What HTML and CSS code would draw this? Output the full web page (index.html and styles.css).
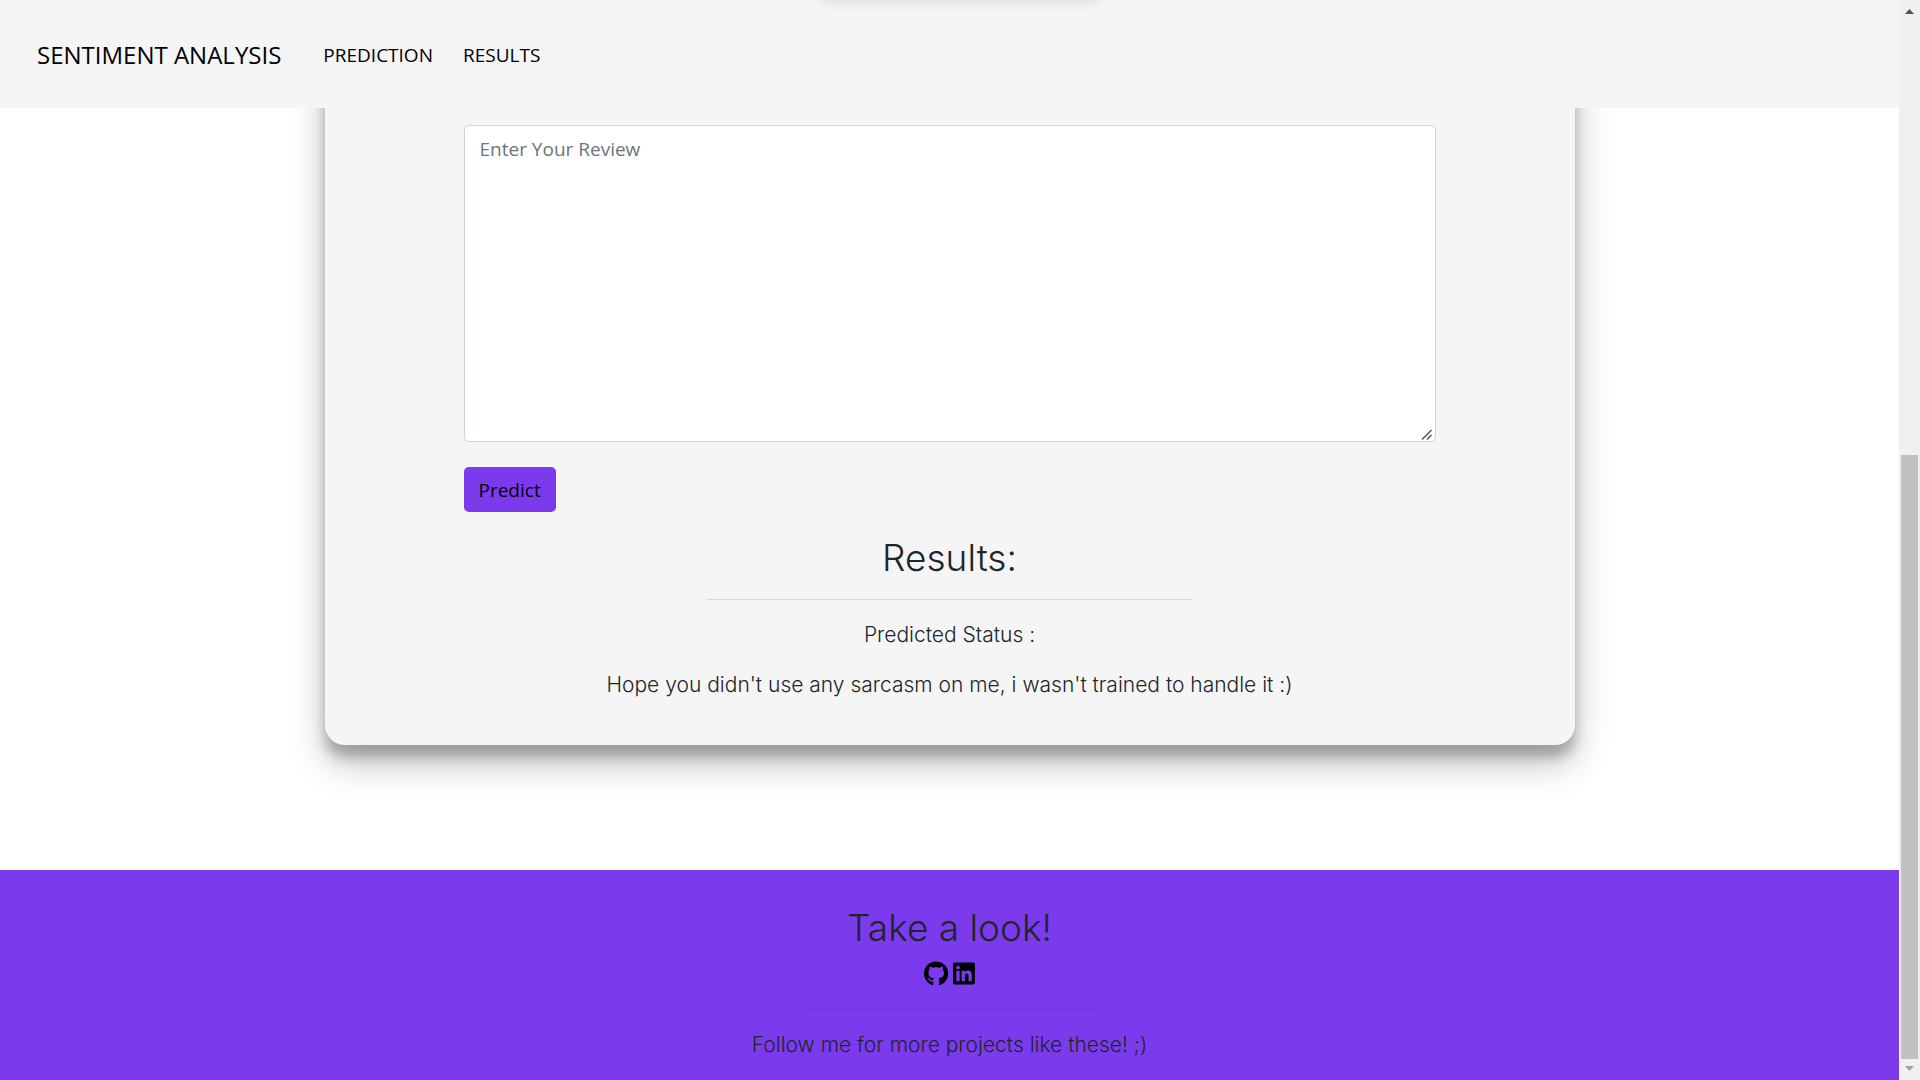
FILE: index.html
```html
<!DOCTYPE html>
<html lang="en">
<head>
<meta charset="utf-8">
<meta name="viewport" content="width=device-width, initial-scale=1">
<title>Sentiment Analysis</title>
<link rel="stylesheet" href="styles.css">
</head>
<body>
<div class="page">
  <header class="navbar">
    <a class="brand" href="#">SENTIMENT ANALYSIS</a>
    <nav class="nav-links">
      <a href="#prediction">PREDICTION</a>
      <a href="#results">RESULTS</a>
    </nav>
  </header>
  <main class="main">
    <section class="card">
      <form class="review-form" id="prediction">
        <textarea class="review-input" aria-label="Your review" placeholder="Enter Your Review"></textarea>
        <button class="predict" type="button">Predict</button>
      </form>
      <div class="results" id="results">
        <h2 class="title">Results:</h2>
        <hr class="rule">
        <p class="text">Predicted Status :</p>
        <p class="text">Hope you didn't use any sarcasm on me, i wasn't trained to handle it :)</p>
      </div>
    </section>
  </main>
  <footer class="footer">
    <h2 class="title">Take a look!</h2>
    <div class="social">
      <a href="#" aria-label="GitHub"><svg class="icon" viewBox="0 0 496 512" aria-hidden="true"><path d="M165.900 397.400c0 2-2.300 3.600-5.200 3.600-3.300.3-5.600-1.300-5.600-3.600 0-2 2.300-3.600 5.200-3.600 3-.3 5.600 1.300 5.600 3.600zm-31.100-4.500c-.7 2 1.300 4.300 4.300 4.900 2.600 1 5.600 0 6.200-2s-1.300-4.300-4.300-5.200c-2.600-.7-5.500.3-6.200 2.300zm44.200-1.700c-2.900.7-4.900 2.600-4.600 4.900.3 2 2.900 3.300 5.900 2.600 2.900-.7 4.900-2.600 4.600-4.600-.3-1.900-3-3.200-5.900-2.900zM244.800 8C106.100 8 0 113.300 0 252c0 110.900 69.800 205.800 169.500 239.200 12.800 2.300 17.300-5.600 17.300-12.100 0-6.200-.3-40.400-.3-61.400 0 0-70 15-84.700-29.800 0 0-11.400-29.100-27.800-36.600 0 0-22.900-15.700 1.600-15.400 0 0 24.900 2 38.600 25.800 21.900 38.600 58.600 27.500 72.900 20.900 2.300-16 8.800-27.100 16-33.700-55.900-6.200-112.300-14.300-112.300-110.500 0-27.500 7.600-41.300 23.600-58.900-2.600-6.500-11.100-33.300 2.600-67.900 20.900-6.500 69 27 69 27 20-5.600 41.500-8.500 62.800-8.500s42.800 2.900 62.800 8.500c0 0 48.100-33.600 69-27 13.700 34.700 5.200 61.400 2.600 67.900 16 17.700 25.800 31.500 25.800 58.900 0 96.500-58.900 104.200-114.800 110.500 9.200 7.900 17 22.900 17 46.400 0 33.700-.3 75.400-.3 83.600 0 6.500 4.600 14.400 17.300 12.100C428.200 457.800 496 362.900 496 252 496 113.300 383.500 8 244.800 8z"/></svg></a>
      <a href="#" aria-label="LinkedIn"><svg class="icon" viewBox="0 0 448 512" aria-hidden="true"><path d="M416 32H31.900C14.300 32 0 46.500 0 64.300v383.400C0 465.500 14.300 480 31.900 480H416c17.600 0 32-14.500 32-32.300V64.300c0-17.800-14.400-32.300-32-32.300zM135.400 416H69V202.200h66.500V416zm-33.200-243c-21.300 0-38.500-17.300-38.500-38.500S80.900 96 102.200 96c21.200 0 38.500 17.300 38.500 38.500 0 21.300-17.200 38.500-38.500 38.500zm282.100 243h-66.400V312c0-24.800-.5-56.700-34.500-56.700-34.600 0-39.900 27-39.900 54.900V416h-66.400V202.200h63.700v29.200h.9c8.900-16.800 30.600-34.500 62.900-34.500 67.200 0 79.700 44.300 79.700 101.900V416z"/></svg></a>
    </div>
    <hr class="rule">
    <p class="text">Follow me for more projects like these! ;)</p>
  </footer>
</div>
<div class="scrollbar" aria-hidden="true">
  <svg class="arrow" viewBox="0 0 9 5"><path d="M0 5 4.500 0 9 5z"/></svg>
  <div class="track"><div class="thumb"></div></div>
  <svg class="arrow arrow-off" viewBox="0 0 9 5"><path d="M0 0 4.500 5 9 0z"/></svg>
</div>
</body>
</html>
```
FILE: styles.css
```css
*, *::before { box-sizing: border-box; }

body {
  display: flex;
  min-height: 100vh;
  margin: 0;
  background: #fff;
  color: #212529;
  font: 20px/30px "Open Sans", "Noto Sans", sans-serif;
}

a { color: #000; text-decoration: none; }

.page {
  flex: 1;
  display: flex;
  flex-direction: column;
  min-width: 0;
}

/* Navigation */
.navbar {
  position: relative;
  z-index: 1;
  display: flex;
  align-items: center;
  gap: 42px;
  height: 108px;
  padding: 2px 37px 0;
  overflow: hidden;
  background: #f5f5f5;
}

.navbar::before {
  content: "";
  position: absolute;
  bottom: 100%;
  left: calc(50% + 10px);
  width: 280px;
  height: 20px;
  border-radius: 4px;
  box-shadow: 0 2px 14px rgba(0, 0, 0, 0.1);
  transform: translateX(-50%);
}

.brand { font-size: 24px; }

.nav-links {
  display: flex;
  gap: 30px;
  font-size: 19px;
}

/* Prediction card */
.main {
  flex: 1;
  padding: 0 20px 125px;
}

.card {
  width: 100%;
  max-width: 1250px;
  margin: -60px auto 0;
  padding: 77px 139px 25px;
  border-radius: 20px;
  background: #f5f5f5;
  box-shadow: 0 18px 35px rgba(0, 0, 0, 0.25), 0 12px 12px rgba(0, 0, 0, 0.22);
}

.review-form {
  display: flex;
  flex-direction: column;
  align-items: flex-start;
  gap: 25px;
}

.review-input {
  width: 100%;
  height: 317px;
  padding: 8px 15px;
  border: 1px solid #ced4da;
  border-radius: 5px;
  background: #fff;
  color: #212529;
  font: 19px/30px "Open Sans", "Noto Sans", sans-serif;
  resize: vertical;
}

.review-input::placeholder { color: #6c757d; }

.review-input::-webkit-resizer {
  background: url("data:image/svg+xml,%3Csvg xmlns='http://www.w3.org/2000/svg' width='15' height='15'%3E%3Cpath d='M2 13.500 11.500 4M7 13.500l4.500-4.500' stroke='%23555' stroke-width='1.500'/%3E%3C/svg%3E") no-repeat;
}

.predict {
  height: 45px;
  padding: 0 15px;
  border: 0;
  border-radius: 5px;
  background: #7c3aed;
  color: #000;
  font: 19px/30px "Open Sans", "Noto Sans", sans-serif;
}

.results {
  margin-top: 25px;
  text-align: center;
}

.title,
.text {
  font-family: Inter, "Open Sans", sans-serif;
  font-weight: 300;
}

.title {
  margin: 0;
  font-size: 37px;
  line-height: 42px;
}

.text {
  margin: 0 0 20px;
  font-size: 21px;
}

.rule {
  width: 50%;
  height: 1px;
  margin: 20px auto;
  border: 0;
  background: #d9dadb;
}

/* Footer */
.footer {
  padding: 37px 20px 0;
  background: #7c3aed;
  text-align: center;
}

.social {
  display: flex;
  justify-content: center;
  gap: 5px;
  margin-top: 12px;
}

.social a { display: flex; }

.icon {
  height: 25px;
  fill: #000;
}

.footer .rule {
  width: 297px;
  margin: 23px auto 20px;
  background: #7236d8;
}

/* Scrollbar */
.scrollbar {
  position: sticky;
  top: 0;
  display: flex;
  flex-direction: column;
  align-items: center;
  width: 21px;
  height: 100vh;
  padding: 9px 0;
  background: #f0f0f0;
}

.arrow {
  width: 9px;
  height: 5px;
  fill: #505050;
}

.arrow-off { fill: #a3a3a3; }

.track {
  flex: 1;
  display: flex;
  align-items: flex-end;
  padding: 7px 0;
}

.thumb {
  width: 17px;
  height: 58.2%;
  background: #c1c1c1;
}
```
